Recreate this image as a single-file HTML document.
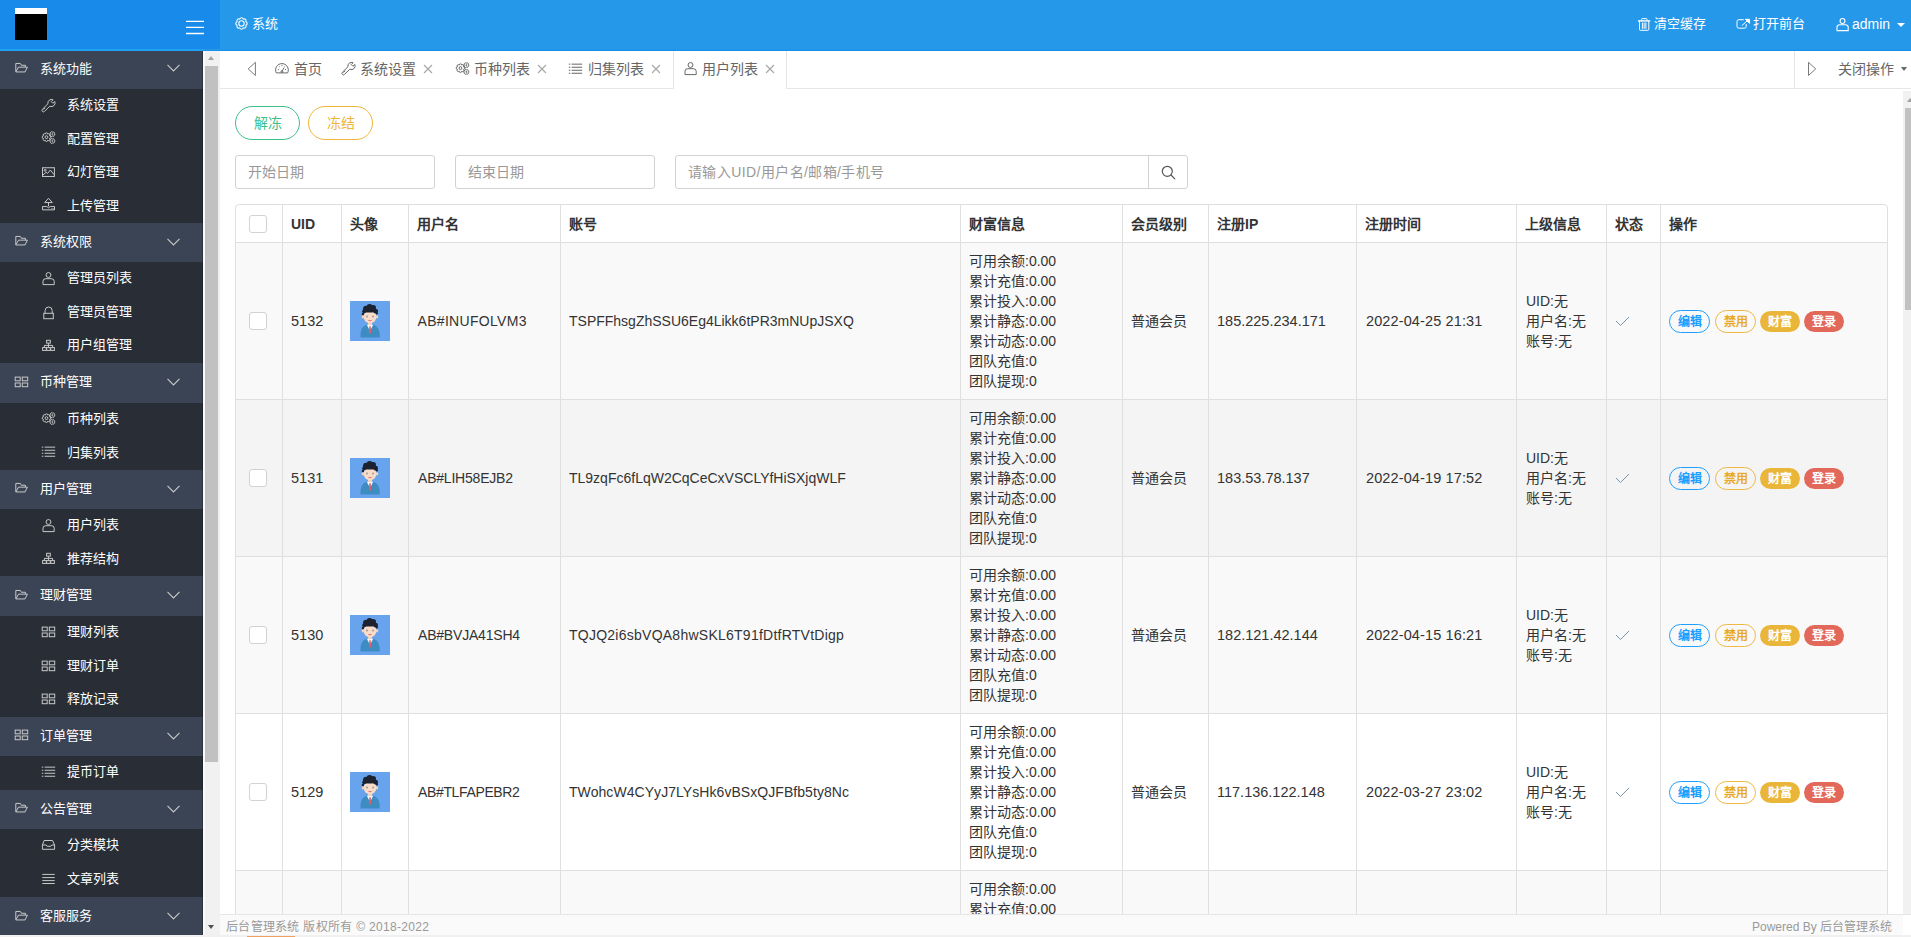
<!DOCTYPE html><html lang="zh-CN"><head><meta charset="utf-8"><title>后台管理系统</title><style>
html,body{margin:0;padding:0;width:1911px;height:937px;overflow:hidden;background:#fff;font-family:"Liberation Sans", sans-serif;}
div,span{box-sizing:border-box;}
</style></head><body>
<div style="position:absolute;left:0px;top:0px;width:1911px;height:51px;background:#2598ea;"></div>
<div style="position:absolute;left:0px;top:0px;width:220px;height:49px;background:#188bea;"></div>
<div style="position:absolute;left:220px;top:49px;width:1691px;height:1px;background:#2295ea;"></div>
<div style="position:absolute;left:203px;top:50px;width:1708px;height:1px;background:#1a8fe8;"></div>
<div style="position:absolute;left:0px;top:49px;width:203px;height:2px;background:#22a0f3;"></div>
<div style="position:absolute;left:15px;top:8px;width:32px;height:32px;background:#000;"></div>
<div style="position:absolute;left:15px;top:8px;width:32px;height:6px;background:#fff;"></div>
<svg style="position:absolute;left:186px;top:18px" width="18" height="18" viewBox="0 0 18 18" stroke="#fff" stroke-width="1.3"><path d="M0 3.4h18M0 9.3h18M0 15.5h18"/></svg>
<svg style="position:absolute;left:234px;top:15.5px" width="15" height="15" viewBox="0 0 14 14" fill="none" stroke="#fff" stroke-width="1.0" stroke-linecap="round" stroke-linejoin="round"><circle cx="7" cy="7" r="2.5"/><path d="M11.07 5.32A1.75 1.75 0 0 1 11.07 8.68A1.75 1.75 0 0 1 8.68 11.07A1.75 1.75 0 0 1 5.32 11.07A1.75 1.75 0 0 1 2.93 8.68A1.75 1.75 0 0 1 2.93 5.32A1.75 1.75 0 0 1 5.32 2.93A1.75 1.75 0 0 1 8.68 2.93A1.75 1.75 0 0 1 11.07 5.32z"/></svg>
<div style="position:absolute;left:252px;top:14.0px;line-height:20px;font-size:13px;color:#fff;font-weight:normal;white-space:nowrap;">系统</div>
<svg style="position:absolute;left:1634px;top:15px;color:#fff" width="18.0" height="18.0" viewBox="0 0 18 18" fill="none" stroke="#fff" stroke-width="1.0" stroke-linecap="butt" stroke-linejoin="miter"><path d="M3.9 5.9H16.2" stroke-width="1.4"/><path d="M7.6 5.6V4.3Q7.6 3.6 8.3 3.6H12.3Q13 3.6 13 4.3V5.6"/><path d="M5.5 6V14.4Q5.5 15.3 6.4 15.3H13.9Q14.8 15.3 14.8 14.4V6"/><path d="M8.4 7.6V13.8M10.15 7.6V13.8M11.9 7.6V13.8"/></svg>
<div style="position:absolute;left:1654px;top:14.0px;line-height:20px;font-size:13px;color:#fff;font-weight:normal;white-space:nowrap;">清空缓存</div>
<svg style="position:absolute;left:1734px;top:15px;color:#fff" width="18.0" height="18.0" viewBox="0 0 18 18" fill="none" stroke="#fff" stroke-width="1.0" stroke-linecap="butt" stroke-linejoin="miter"><path d="M9.8 4.7H4.8Q3 4.7 3 6.5V11.4Q3 13.2 4.8 13.2H10.4Q12.2 13.2 12.2 11.4V9"/><path d="M7.8 10.6L13.8 5.4"/><path d="M11.3 4.3H15.6V8.4Z" fill="currentColor"/></svg>
<div style="position:absolute;left:1753px;top:14.0px;line-height:20px;font-size:13px;color:#fff;font-weight:normal;white-space:nowrap;">打开前台</div>
<svg style="position:absolute;left:1834px;top:16px;color:#fff" width="18.0" height="18.0" viewBox="0 0 18 18" fill="none" stroke="#fff" stroke-width="1.1" stroke-linecap="butt" stroke-linejoin="miter"><circle cx="8.5" cy="5" r="2.45"/><path d="M3 14.6V11.2Q3 8.7 5.8 8.7H11.2Q14.2 8.7 14.2 11.2V14.6Z"/></svg>
<div style="position:absolute;left:1852px;top:14.0px;line-height:20px;font-size:14px;color:#fff;font-weight:normal;white-space:nowrap;">admin</div>
<div style="position:absolute;left:1897px;top:23px;width:0;height:0;border-left:4px solid transparent;border-right:4px solid transparent;border-top:4px solid #fff;"></div>
<div style="position:absolute;left:0px;top:51px;width:203px;height:886px;background:#282d36;"></div>
<div style="position:absolute;left:0;top:51px;width:203px;height:886px;overflow:hidden;">
<div style="position:absolute;left:0;top:-51px;width:203px;height:1000px;">
<div style="position:absolute;left:0px;top:49.5px;width:203px;height:39.5px;background:#3a4454;"></div><svg style="position:absolute;left:13px;top:60px;color:#c8c8c8" width="18.0" height="18.0" viewBox="0 0 18 18" fill="none" stroke="#c8c8c8" stroke-width="1.0" stroke-linecap="butt" stroke-linejoin="miter"><path d="M2.8 11.95V3.45H7.3L8.3 5.25H12.4V7.15"/><path d="M5.5 7.15H14.4L12 11.95H2.8"/><path d="M5.5 7.15L3 11.6"/></svg><div style="position:absolute;left:40px;top:58.55px;line-height:20px;font-size:13px;color:#fff;font-weight:normal;white-space:nowrap;">系统功能</div><svg style="position:absolute;left:167px;top:64.25px" width="13" height="8" viewBox="0 0 13 8" fill="none" stroke="#c8c8c8" stroke-width="1.1"><path d="M0.5 0.8L6.5 7L12.5 0.8"/></svg><svg style="position:absolute;left:40px;top:97px;color:#c8c8c8" width="18.0" height="18.0" viewBox="0 0 18 18" fill="none" stroke="#c8c8c8" stroke-width="1.0" stroke-linecap="butt" stroke-linejoin="miter"><path d="M7.97 6.71L2.34 12.34A1.5 1.5 0 0 0 4.46 14.46L9.77 9.15A3.6 3.6 0 0 0 14.75 4.45L12.92 6.28L11.22 4.59L13.06 2.75A3.6 3.6 0 0 0 7.97 6.71Z"/><path d="M3.3 12.6L5.2 10.7"/></svg><div style="position:absolute;left:67px;top:95.05px;line-height:20px;font-size:13px;color:#fff;font-weight:normal;white-space:nowrap;">系统设置</div><svg style="position:absolute;left:40px;top:130px;color:#c8c8c8" width="18.0" height="18.0" viewBox="0 0 18 18" fill="none" stroke="#c8c8c8" stroke-width="1.0" stroke-linecap="butt" stroke-linejoin="miter"><path d="M9.55 5.89A1.0 1.0 0 0 1 9.55 8.41A1.0 1.0 0 0 1 7.76 10.20A1.0 1.0 0 0 1 5.24 10.20A1.0 1.0 0 0 1 3.45 8.41A1.0 1.0 0 0 1 3.45 5.89A1.0 1.0 0 0 1 5.24 4.10A1.0 1.0 0 0 1 7.76 4.10A1.0 1.0 0 0 1 9.55 5.89z"/><circle cx="6.5" cy="7.15" r="1.4"/><path d="M13.95 3.20A0.75 0.75 0 0 1 13.95 5.10A0.75 0.75 0 0 1 12.30 6.05A0.75 0.75 0 0 1 10.65 5.10A0.75 0.75 0 0 1 10.65 3.20A0.75 0.75 0 0 1 12.30 2.25A0.75 0.75 0 0 1 13.95 3.20z"/><path d="M13.95 10.00A0.75 0.75 0 0 1 13.95 11.90A0.75 0.75 0 0 1 12.30 12.85A0.75 0.75 0 0 1 10.65 11.90A0.75 0.75 0 0 1 10.65 10.00A0.75 0.75 0 0 1 12.30 9.05A0.75 0.75 0 0 1 13.95 10.00z"/><circle cx="12.3" cy="4.15" r="0.5"/><circle cx="12.3" cy="10.95" r="0.5"/></svg><div style="position:absolute;left:67px;top:128.55px;line-height:20px;font-size:13px;color:#fff;font-weight:normal;white-space:nowrap;">配置管理</div><svg style="position:absolute;left:40px;top:164px;color:#c8c8c8" width="18.0" height="18.0" viewBox="0 0 18 18" fill="none" stroke="#c8c8c8" stroke-width="1.0" stroke-linecap="butt" stroke-linejoin="miter"><rect x="2.5" y="3.75" width="11.9" height="8.7"/><circle cx="5.2" cy="6.3" r="1"/><path d="M3 10.9L6.2 8.3L7.6 9.4L10.3 6L14 10.6"/></svg><div style="position:absolute;left:67px;top:162.05px;line-height:20px;font-size:13px;color:#fff;font-weight:normal;white-space:nowrap;">幻灯管理</div><svg style="position:absolute;left:40px;top:197px;color:#c8c8c8" width="18.0" height="18.0" viewBox="0 0 18 18" fill="none" stroke="#c8c8c8" stroke-width="1.0" stroke-linecap="butt" stroke-linejoin="miter"><path d="M8.5 1.25L12.3 5.55H4.7Z"/><path d="M8.5 5.55V9.3"/><path d="M2.5 9.55H6.8L8.5 10.8L10.2 9.55H14.5V12.85H2.5Z"/><path d="M11.8 11.2V11.9M13.2 11.2V11.9"/></svg><div style="position:absolute;left:67px;top:195.55px;line-height:20px;font-size:13px;color:#fff;font-weight:normal;white-space:nowrap;">上传管理</div><div style="position:absolute;left:0px;top:223px;width:203px;height:39px;background:#3a4454;"></div><svg style="position:absolute;left:13px;top:233px;color:#c8c8c8" width="18.0" height="18.0" viewBox="0 0 18 18" fill="none" stroke="#c8c8c8" stroke-width="1.0" stroke-linecap="butt" stroke-linejoin="miter"><path d="M2.8 11.95V3.45H7.3L8.3 5.25H12.4V7.15"/><path d="M5.5 7.15H14.4L12 11.95H2.8"/><path d="M5.5 7.15L3 11.6"/></svg><div style="position:absolute;left:40px;top:231.8px;line-height:20px;font-size:13px;color:#fff;font-weight:normal;white-space:nowrap;">系统权限</div><svg style="position:absolute;left:167px;top:237.5px" width="13" height="8" viewBox="0 0 13 8" fill="none" stroke="#c8c8c8" stroke-width="1.1"><path d="M0.5 0.8L6.5 7L12.5 0.8"/></svg><svg style="position:absolute;left:40px;top:270px;color:#c8c8c8" width="18.0" height="18.0" viewBox="0 0 18 18" fill="none" stroke="#c8c8c8" stroke-width="1.0" stroke-linecap="butt" stroke-linejoin="miter"><circle cx="8.5" cy="5" r="2.45"/><path d="M3 14.6V11.2Q3 8.7 5.8 8.7H11.2Q14.2 8.7 14.2 11.2V14.6Z"/></svg><div style="position:absolute;left:67px;top:268.1333333333333px;line-height:20px;font-size:13px;color:#fff;font-weight:normal;white-space:nowrap;">管理员列表</div><svg style="position:absolute;left:40px;top:304px;color:#c8c8c8" width="18.0" height="18.0" viewBox="0 0 18 18" fill="none" stroke="#c8c8c8" stroke-width="1.0" stroke-linecap="butt" stroke-linejoin="miter"><path d="M5.1 9.3V6.55A3.55 3.55 0 0 1 12.2 6.55V9.3"/><rect x="3.8" y="9.3" width="9.5" height="5.4"/></svg><div style="position:absolute;left:67px;top:301.8px;line-height:20px;font-size:13px;color:#fff;font-weight:normal;white-space:nowrap;">管理员管理</div><svg style="position:absolute;left:40px;top:337px;color:#c8c8c8" width="18.0" height="18.0" viewBox="0 0 18 18" fill="none" stroke="#c8c8c8" stroke-width="1.0" stroke-linecap="butt" stroke-linejoin="miter"><rect x="6.6" y="3.3" width="3.7" height="2.8"/><path d="M8.45 6.1V8.4M4.4 10.6V8.4H12.6V10.6M8.45 8.4V10.6"/><rect x="2.6" y="10.6" width="3.7" height="2.8"/><rect x="6.6" y="10.6" width="3.7" height="2.8"/><rect x="10.7" y="10.6" width="3.7" height="2.8"/></svg><div style="position:absolute;left:67px;top:335.46666666666664px;line-height:20px;font-size:13px;color:#fff;font-weight:normal;white-space:nowrap;">用户组管理</div><div style="position:absolute;left:0px;top:363px;width:203px;height:40px;background:#3a4454;"></div><svg style="position:absolute;left:13px;top:374px;color:#c8c8c8" width="18.0" height="18.0" viewBox="0 0 18 18" fill="none" stroke="#c8c8c8" stroke-width="1.0" stroke-linecap="butt" stroke-linejoin="miter"><rect x="2.2" y="3.1" width="5.0" height="3.7"/><rect x="9.3" y="3.1" width="5.4" height="3.7"/><rect x="2.2" y="9" width="5.0" height="3.7"/><rect x="9.3" y="9" width="5.4" height="3.7"/></svg><div style="position:absolute;left:40px;top:372.3px;line-height:20px;font-size:13px;color:#fff;font-weight:normal;white-space:nowrap;">币种管理</div><svg style="position:absolute;left:167px;top:378.0px" width="13" height="8" viewBox="0 0 13 8" fill="none" stroke="#c8c8c8" stroke-width="1.1"><path d="M0.5 0.8L6.5 7L12.5 0.8"/></svg><svg style="position:absolute;left:40px;top:411px;color:#c8c8c8" width="18.0" height="18.0" viewBox="0 0 18 18" fill="none" stroke="#c8c8c8" stroke-width="1.0" stroke-linecap="butt" stroke-linejoin="miter"><path d="M9.55 5.89A1.0 1.0 0 0 1 9.55 8.41A1.0 1.0 0 0 1 7.76 10.20A1.0 1.0 0 0 1 5.24 10.20A1.0 1.0 0 0 1 3.45 8.41A1.0 1.0 0 0 1 3.45 5.89A1.0 1.0 0 0 1 5.24 4.10A1.0 1.0 0 0 1 7.76 4.10A1.0 1.0 0 0 1 9.55 5.89z"/><circle cx="6.5" cy="7.15" r="1.4"/><path d="M13.95 3.20A0.75 0.75 0 0 1 13.95 5.10A0.75 0.75 0 0 1 12.30 6.05A0.75 0.75 0 0 1 10.65 5.10A0.75 0.75 0 0 1 10.65 3.20A0.75 0.75 0 0 1 12.30 2.25A0.75 0.75 0 0 1 13.95 3.20z"/><path d="M13.95 10.00A0.75 0.75 0 0 1 13.95 11.90A0.75 0.75 0 0 1 12.30 12.85A0.75 0.75 0 0 1 10.65 11.90A0.75 0.75 0 0 1 10.65 10.00A0.75 0.75 0 0 1 12.30 9.05A0.75 0.75 0 0 1 13.95 10.00z"/><circle cx="12.3" cy="4.15" r="0.5"/><circle cx="12.3" cy="10.95" r="0.5"/></svg><div style="position:absolute;left:67px;top:409.05px;line-height:20px;font-size:13px;color:#fff;font-weight:normal;white-space:nowrap;">币种列表</div><svg style="position:absolute;left:40px;top:444px;color:#c8c8c8" width="18.0" height="18.0" viewBox="0 0 18 18" fill="none" stroke="#c8c8c8" stroke-width="1.0" stroke-linecap="butt" stroke-linejoin="miter"><path d="M1.8 3.15H3.3M1.8 6.25H3.3M1.8 9.25H3.3M1.8 12.25H3.3M4.6 3.15H15.2M4.6 6.25H15.2M4.6 9.25H15.2M4.6 12.25H15.2"/></svg><div style="position:absolute;left:67px;top:442.55px;line-height:20px;font-size:13px;color:#fff;font-weight:normal;white-space:nowrap;">归集列表</div><div style="position:absolute;left:0px;top:470px;width:203px;height:39px;background:#3a4454;"></div><svg style="position:absolute;left:13px;top:480px;color:#c8c8c8" width="18.0" height="18.0" viewBox="0 0 18 18" fill="none" stroke="#c8c8c8" stroke-width="1.0" stroke-linecap="butt" stroke-linejoin="miter"><path d="M2.8 11.95V3.45H7.3L8.3 5.25H12.4V7.15"/><path d="M5.5 7.15H14.4L12 11.95H2.8"/><path d="M5.5 7.15L3 11.6"/></svg><div style="position:absolute;left:40px;top:478.8px;line-height:20px;font-size:13px;color:#fff;font-weight:normal;white-space:nowrap;">用户管理</div><svg style="position:absolute;left:167px;top:484.5px" width="13" height="8" viewBox="0 0 13 8" fill="none" stroke="#c8c8c8" stroke-width="1.1"><path d="M0.5 0.8L6.5 7L12.5 0.8"/></svg><svg style="position:absolute;left:40px;top:517px;color:#c8c8c8" width="18.0" height="18.0" viewBox="0 0 18 18" fill="none" stroke="#c8c8c8" stroke-width="1.0" stroke-linecap="butt" stroke-linejoin="miter"><circle cx="8.5" cy="5" r="2.45"/><path d="M3 14.6V11.2Q3 8.7 5.8 8.7H11.2Q14.2 8.7 14.2 11.2V14.6Z"/></svg><div style="position:absolute;left:67px;top:515.05px;line-height:20px;font-size:13px;color:#fff;font-weight:normal;white-space:nowrap;">用户列表</div><svg style="position:absolute;left:40px;top:550px;color:#c8c8c8" width="18.0" height="18.0" viewBox="0 0 18 18" fill="none" stroke="#c8c8c8" stroke-width="1.0" stroke-linecap="butt" stroke-linejoin="miter"><rect x="6.6" y="3.3" width="3.7" height="2.8"/><path d="M8.45 6.1V8.4M4.4 10.6V8.4H12.6V10.6M8.45 8.4V10.6"/><rect x="2.6" y="10.6" width="3.7" height="2.8"/><rect x="6.6" y="10.6" width="3.7" height="2.8"/><rect x="10.7" y="10.6" width="3.7" height="2.8"/></svg><div style="position:absolute;left:67px;top:548.55px;line-height:20px;font-size:13px;color:#fff;font-weight:normal;white-space:nowrap;">推荐结构</div><div style="position:absolute;left:0px;top:576px;width:203px;height:40px;background:#3a4454;"></div><svg style="position:absolute;left:13px;top:587px;color:#c8c8c8" width="18.0" height="18.0" viewBox="0 0 18 18" fill="none" stroke="#c8c8c8" stroke-width="1.0" stroke-linecap="butt" stroke-linejoin="miter"><path d="M2.8 11.95V3.45H7.3L8.3 5.25H12.4V7.15"/><path d="M5.5 7.15H14.4L12 11.95H2.8"/><path d="M5.5 7.15L3 11.6"/></svg><div style="position:absolute;left:40px;top:585.3px;line-height:20px;font-size:13px;color:#fff;font-weight:normal;white-space:nowrap;">理财管理</div><svg style="position:absolute;left:167px;top:591.0px" width="13" height="8" viewBox="0 0 13 8" fill="none" stroke="#c8c8c8" stroke-width="1.1"><path d="M0.5 0.8L6.5 7L12.5 0.8"/></svg><svg style="position:absolute;left:40px;top:624px;color:#c8c8c8" width="18.0" height="18.0" viewBox="0 0 18 18" fill="none" stroke="#c8c8c8" stroke-width="1.0" stroke-linecap="butt" stroke-linejoin="miter"><rect x="2.2" y="3.1" width="5.0" height="3.7"/><rect x="9.3" y="3.1" width="5.4" height="3.7"/><rect x="2.2" y="9" width="5.0" height="3.7"/><rect x="9.3" y="9" width="5.4" height="3.7"/></svg><div style="position:absolute;left:67px;top:622.1333333333333px;line-height:20px;font-size:13px;color:#fff;font-weight:normal;white-space:nowrap;">理财列表</div><svg style="position:absolute;left:40px;top:658px;color:#c8c8c8" width="18.0" height="18.0" viewBox="0 0 18 18" fill="none" stroke="#c8c8c8" stroke-width="1.0" stroke-linecap="butt" stroke-linejoin="miter"><rect x="2.2" y="3.1" width="5.0" height="3.7"/><rect x="9.3" y="3.1" width="5.4" height="3.7"/><rect x="2.2" y="9" width="5.0" height="3.7"/><rect x="9.3" y="9" width="5.4" height="3.7"/></svg><div style="position:absolute;left:67px;top:655.8px;line-height:20px;font-size:13px;color:#fff;font-weight:normal;white-space:nowrap;">理财订单</div><svg style="position:absolute;left:40px;top:691px;color:#c8c8c8" width="18.0" height="18.0" viewBox="0 0 18 18" fill="none" stroke="#c8c8c8" stroke-width="1.0" stroke-linecap="butt" stroke-linejoin="miter"><rect x="2.2" y="3.1" width="5.0" height="3.7"/><rect x="9.3" y="3.1" width="5.4" height="3.7"/><rect x="2.2" y="9" width="5.0" height="3.7"/><rect x="9.3" y="9" width="5.4" height="3.7"/></svg><div style="position:absolute;left:67px;top:689.4666666666667px;line-height:20px;font-size:13px;color:#fff;font-weight:normal;white-space:nowrap;">释放记录</div><div style="position:absolute;left:0px;top:717px;width:203px;height:39px;background:#3a4454;"></div><svg style="position:absolute;left:13px;top:727px;color:#c8c8c8" width="18.0" height="18.0" viewBox="0 0 18 18" fill="none" stroke="#c8c8c8" stroke-width="1.0" stroke-linecap="butt" stroke-linejoin="miter"><rect x="2.2" y="3.1" width="5.0" height="3.7"/><rect x="9.3" y="3.1" width="5.4" height="3.7"/><rect x="2.2" y="9" width="5.0" height="3.7"/><rect x="9.3" y="9" width="5.4" height="3.7"/></svg><div style="position:absolute;left:40px;top:725.8px;line-height:20px;font-size:13px;color:#fff;font-weight:normal;white-space:nowrap;">订单管理</div><svg style="position:absolute;left:167px;top:731.5px" width="13" height="8" viewBox="0 0 13 8" fill="none" stroke="#c8c8c8" stroke-width="1.1"><path d="M0.5 0.8L6.5 7L12.5 0.8"/></svg><svg style="position:absolute;left:40px;top:764px;color:#c8c8c8" width="18.0" height="18.0" viewBox="0 0 18 18" fill="none" stroke="#c8c8c8" stroke-width="1.0" stroke-linecap="butt" stroke-linejoin="miter"><path d="M1.8 3.15H3.3M1.8 6.25H3.3M1.8 9.25H3.3M1.8 12.25H3.3M4.6 3.15H15.2M4.6 6.25H15.2M4.6 9.25H15.2M4.6 12.25H15.2"/></svg><div style="position:absolute;left:67px;top:762.3px;line-height:20px;font-size:13px;color:#fff;font-weight:normal;white-space:nowrap;">提币订单</div><div style="position:absolute;left:0px;top:790px;width:203px;height:39px;background:#3a4454;"></div><svg style="position:absolute;left:13px;top:800px;color:#c8c8c8" width="18.0" height="18.0" viewBox="0 0 18 18" fill="none" stroke="#c8c8c8" stroke-width="1.0" stroke-linecap="butt" stroke-linejoin="miter"><path d="M2.8 11.95V3.45H7.3L8.3 5.25H12.4V7.15"/><path d="M5.5 7.15H14.4L12 11.95H2.8"/><path d="M5.5 7.15L3 11.6"/></svg><div style="position:absolute;left:40px;top:798.8px;line-height:20px;font-size:13px;color:#fff;font-weight:normal;white-space:nowrap;">公告管理</div><svg style="position:absolute;left:167px;top:804.5px" width="13" height="8" viewBox="0 0 13 8" fill="none" stroke="#c8c8c8" stroke-width="1.1"><path d="M0.5 0.8L6.5 7L12.5 0.8"/></svg><svg style="position:absolute;left:40px;top:837px;color:#c8c8c8" width="18.0" height="18.0" viewBox="0 0 18 18" fill="none" stroke="#c8c8c8" stroke-width="1.0" stroke-linecap="butt" stroke-linejoin="miter"><path d="M2.4 8L4.1 3.5H12.5L14.6 8V12.3H2.4Z"/><path d="M2.4 8H6.3L7.2 9.3H10.8L11.7 8H14.6"/></svg><div style="position:absolute;left:67px;top:835.3px;line-height:20px;font-size:13px;color:#fff;font-weight:normal;white-space:nowrap;">分类模块</div><svg style="position:absolute;left:40px;top:871px;color:#c8c8c8" width="18.0" height="18.0" viewBox="0 0 18 18" fill="none" stroke="#c8c8c8" stroke-width="1.0" stroke-linecap="butt" stroke-linejoin="miter"><path d="M2.3 3.4H14.7M2.3 6.6H14.7M2.3 9.6H14.7M2.3 12.5H14.7"/></svg><div style="position:absolute;left:67px;top:869.3px;line-height:20px;font-size:13px;color:#fff;font-weight:normal;white-space:nowrap;">文章列表</div><div style="position:absolute;left:0px;top:897px;width:203px;height:40px;background:#3a4454;"></div><svg style="position:absolute;left:13px;top:908px;color:#c8c8c8" width="18.0" height="18.0" viewBox="0 0 18 18" fill="none" stroke="#c8c8c8" stroke-width="1.0" stroke-linecap="butt" stroke-linejoin="miter"><path d="M2.8 11.95V3.45H7.3L8.3 5.25H12.4V7.15"/><path d="M5.5 7.15H14.4L12 11.95H2.8"/><path d="M5.5 7.15L3 11.6"/></svg><div style="position:absolute;left:40px;top:906.3px;line-height:20px;font-size:13px;color:#fff;font-weight:normal;white-space:nowrap;">客服服务</div><svg style="position:absolute;left:167px;top:912.0px" width="13" height="8" viewBox="0 0 13 8" fill="none" stroke="#c8c8c8" stroke-width="1.1"><path d="M0.5 0.8L6.5 7L12.5 0.8"/></svg>
</div></div>
<div style="position:absolute;left:202px;top:51px;width:1px;height:884px;background:rgba(0,0,0,0.22);"></div>
<div style="position:absolute;left:203px;top:51px;width:17px;height:886px;background:#f1f1f1;"></div>
<div style="position:absolute;left:203px;top:51px;width:2px;height:886px;background:#fafafa;"></div>
<div style="position:absolute;left:208px;top:56px;width:0;height:0;border-left:3.5px solid transparent;border-right:3.5px solid transparent;border-bottom:4px solid #a3a3a3;"></div>
<div style="position:absolute;left:205px;top:66px;width:13px;height:696px;background:#c1c1c1;"></div>
<div style="position:absolute;left:208px;top:925px;width:0;height:0;border-left:3.5px solid transparent;border-right:3.5px solid transparent;border-top:4px solid #505050;"></div>
<div style="position:absolute;left:0px;top:935px;width:1911px;height:2px;background:#f0f0f0;"></div>
<div style="position:absolute;left:247px;top:936px;width:48px;height:1px;background:#f0a060;"></div>
<div style="position:absolute;left:220px;top:51px;width:1691px;height:38px;background:#fff;"></div>
<div style="position:absolute;left:220px;top:88px;width:1691px;height:1px;background:#e6e6e6;"></div>
<svg style="position:absolute;left:247px;top:61px" width="10" height="16" viewBox="0 0 10 16" fill="none" stroke="#7a7a7a" stroke-width="1"><path d="M8.4 1.3L1.2 7.9L8.4 14.5Z"/></svg>
<svg style="position:absolute;left:273px;top:60px;color:#666" width="18.0" height="18.0" viewBox="0 0 18 18" fill="none" stroke="#666" stroke-width="1.0" stroke-linecap="butt" stroke-linejoin="miter"><path d="M3.33 12.9A6.35 6.35 0 1 1 14.57 12.9Z"/><path d="M8.95 11.3L11.2 7.6M4.9 9.6H5.9M6.2 6.5L6.8 7.1M8.95 5.1V6.1M11.7 6.5L11.1 7.1M12 9.6H13"/><circle cx="8.95" cy="11.6" r="0.9"/></svg>
<div style="position:absolute;left:294px;top:59.0px;line-height:20px;font-size:14px;color:#666;font-weight:normal;white-space:nowrap;">首页</div>
<svg style="position:absolute;left:340px;top:60px;color:#666" width="18.0" height="18.0" viewBox="0 0 18 18" fill="none" stroke="#666" stroke-width="1.0" stroke-linecap="butt" stroke-linejoin="miter"><path d="M7.97 6.71L2.34 12.34A1.5 1.5 0 0 0 4.46 14.46L9.77 9.15A3.6 3.6 0 0 0 14.75 4.45L12.92 6.28L11.22 4.59L13.06 2.75A3.6 3.6 0 0 0 7.97 6.71Z"/><path d="M3.3 12.6L5.2 10.7"/></svg>
<div style="position:absolute;left:360px;top:59.0px;line-height:20px;font-size:14px;color:#666;font-weight:normal;white-space:nowrap;">系统设置</div>
<svg style="position:absolute;left:423.4px;top:63.6px" width="10" height="10" viewBox="0 0 10 10" fill="none" stroke="#a8a8a8" stroke-width="1.15"><path d="M1 1L9 9M9 1L1 9"/></svg>
<svg style="position:absolute;left:454px;top:61px;color:#666" width="18.0" height="18.0" viewBox="0 0 18 18" fill="none" stroke="#666" stroke-width="1.0" stroke-linecap="butt" stroke-linejoin="miter"><path d="M9.55 5.89A1.0 1.0 0 0 1 9.55 8.41A1.0 1.0 0 0 1 7.76 10.20A1.0 1.0 0 0 1 5.24 10.20A1.0 1.0 0 0 1 3.45 8.41A1.0 1.0 0 0 1 3.45 5.89A1.0 1.0 0 0 1 5.24 4.10A1.0 1.0 0 0 1 7.76 4.10A1.0 1.0 0 0 1 9.55 5.89z"/><circle cx="6.5" cy="7.15" r="1.4"/><path d="M13.95 3.20A0.75 0.75 0 0 1 13.95 5.10A0.75 0.75 0 0 1 12.30 6.05A0.75 0.75 0 0 1 10.65 5.10A0.75 0.75 0 0 1 10.65 3.20A0.75 0.75 0 0 1 12.30 2.25A0.75 0.75 0 0 1 13.95 3.20z"/><path d="M13.95 10.00A0.75 0.75 0 0 1 13.95 11.90A0.75 0.75 0 0 1 12.30 12.85A0.75 0.75 0 0 1 10.65 11.90A0.75 0.75 0 0 1 10.65 10.00A0.75 0.75 0 0 1 12.30 9.05A0.75 0.75 0 0 1 13.95 10.00z"/><circle cx="12.3" cy="4.15" r="0.5"/><circle cx="12.3" cy="10.95" r="0.5"/></svg>
<div style="position:absolute;left:474px;top:59.0px;line-height:20px;font-size:14px;color:#666;font-weight:normal;white-space:nowrap;">币种列表</div>
<svg style="position:absolute;left:537.4px;top:63.6px" width="10" height="10" viewBox="0 0 10 10" fill="none" stroke="#a8a8a8" stroke-width="1.15"><path d="M1 1L9 9M9 1L1 9"/></svg>
<svg style="position:absolute;left:567px;top:61px;color:#666" width="18.0" height="18.0" viewBox="0 0 18 18" fill="none" stroke="#666" stroke-width="1.0" stroke-linecap="butt" stroke-linejoin="miter"><path d="M1.8 3.15H3.3M1.8 6.25H3.3M1.8 9.25H3.3M1.8 12.25H3.3M4.6 3.15H15.2M4.6 6.25H15.2M4.6 9.25H15.2M4.6 12.25H15.2"/></svg>
<div style="position:absolute;left:588px;top:59.0px;line-height:20px;font-size:14px;color:#666;font-weight:normal;white-space:nowrap;">归集列表</div>
<svg style="position:absolute;left:651.4px;top:63.6px" width="10" height="10" viewBox="0 0 10 10" fill="none" stroke="#a8a8a8" stroke-width="1.15"><path d="M1 1L9 9M9 1L1 9"/></svg>
<svg style="position:absolute;left:682px;top:60px;color:#666" width="18.0" height="18.0" viewBox="0 0 18 18" fill="none" stroke="#666" stroke-width="1.0" stroke-linecap="butt" stroke-linejoin="miter"><circle cx="8.5" cy="5" r="2.45"/><path d="M3 14.6V11.2Q3 8.7 5.8 8.7H11.2Q14.2 8.7 14.2 11.2V14.6Z"/></svg>
<div style="position:absolute;left:702px;top:59.0px;line-height:20px;font-size:14px;color:#666;font-weight:normal;white-space:nowrap;">用户列表</div>
<svg style="position:absolute;left:765.4px;top:63.6px" width="10" height="10" viewBox="0 0 10 10" fill="none" stroke="#a8a8a8" stroke-width="1.15"><path d="M1 1L9 9M9 1L1 9"/></svg>
<div style="position:absolute;left:673px;top:51px;width:1px;height:38px;background:#e6e6e6;"></div>
<div style="position:absolute;left:786px;top:51px;width:1px;height:38px;background:#e6e6e6;"></div>
<div style="position:absolute;left:674px;top:88px;width:112px;height:1px;background:#fff;"></div>
<div style="position:absolute;left:1794px;top:51px;width:1px;height:38px;background:#e6e6e6;"></div>
<svg style="position:absolute;left:1807px;top:61px" width="10" height="16" viewBox="0 0 10 16" fill="none" stroke="#7a7a7a" stroke-width="1"><path d="M1.5 1.3L8.7 7.9L1.5 14.5Z"/></svg>
<div style="position:absolute;left:1838px;top:59.0px;line-height:20px;font-size:14px;color:#666;font-weight:normal;white-space:nowrap;">关闭操作</div>
<div style="position:absolute;left:1901px;top:67px;width:0;height:0;border-left:3.5px solid transparent;border-right:3.5px solid transparent;border-top:4px solid #666;"></div>
<div style="position:absolute;left:1903px;top:91px;width:8px;height:823px;background:#f1f1f1;"></div>
<div style="position:absolute;left:1905px;top:108px;width:6px;height:202px;background:#c1c1c1;"></div>
<div style="position:absolute;left:1907px;top:98px;width:0;height:0;border-left:3.5px solid transparent;border-right:3.5px solid transparent;border-bottom:4px solid #a3a3a3;"></div>
<div style="position:absolute;left:235px;top:106px;width:65px;height:34px;border:1px solid #3dbf8a;border-radius:17px;color:#3dbf8a;font-size:14px;line-height:32px;text-align:center;">解冻</div>
<div style="position:absolute;left:308px;top:106px;width:65px;height:34px;border:1px solid #efb63a;border-radius:17px;color:#efb63a;font-size:14px;line-height:32px;text-align:center;">冻结</div>
<div style="position:absolute;left:235px;top:155px;width:200px;height:34px;border:1px solid #d2d2d2;border-radius:3px;color:#999;font-size:14px;line-height:32px;padding-left:12px;">开始日期</div>
<div style="position:absolute;left:455px;top:155px;width:200px;height:34px;border:1px solid #d2d2d2;border-radius:3px;color:#999;font-size:14px;line-height:32px;padding-left:12px;">结束日期</div>
<div style="position:absolute;left:675px;top:155px;width:513px;height:34px;border:1px solid #d2d2d2;border-radius:3px;color:#999;font-size:14px;line-height:32px;padding-left:12px;"><span style="letter-spacing:0.4px">请输入UID/用户名/邮箱/手机号</span></div>
<div style="position:absolute;left:1148px;top:156px;width:1px;height:32px;background:#d2d2d2;"></div>
<svg style="position:absolute;left:1161px;top:165px" width="15" height="15" viewBox="0 0 15 15" fill="none" stroke="#555" stroke-width="1.2" stroke-linecap="round"><circle cx="6.3" cy="6.3" r="5"/><path d="M10 10l3.8 3.8"/></svg>
<div style="position:absolute;left:0;top:0;width:1903px;height:914px;overflow:hidden;">
<div style="position:absolute;left:236px;top:243px;width:1651px;height:156px;background:#f9f9f9;"></div><div style="position:absolute;left:236px;top:400px;width:1651px;height:156px;background:#f4f4f4;"></div><div style="position:absolute;left:236px;top:557px;width:1651px;height:156px;background:#f9f9f9;"></div><div style="position:absolute;left:236px;top:714px;width:1651px;height:156px;background:#fff;"></div><div style="position:absolute;left:236px;top:871px;width:1651px;height:156px;background:#f9f9f9;"></div><div style="position:absolute;left:282px;top:204px;width:1px;height:820px;background:#dfdfdf;"></div><div style="position:absolute;left:341px;top:204px;width:1px;height:820px;background:#dfdfdf;"></div><div style="position:absolute;left:408px;top:204px;width:1px;height:820px;background:#dfdfdf;"></div><div style="position:absolute;left:560px;top:204px;width:1px;height:820px;background:#dfdfdf;"></div><div style="position:absolute;left:960px;top:204px;width:1px;height:820px;background:#dfdfdf;"></div><div style="position:absolute;left:1122px;top:204px;width:1px;height:820px;background:#dfdfdf;"></div><div style="position:absolute;left:1208px;top:204px;width:1px;height:820px;background:#dfdfdf;"></div><div style="position:absolute;left:1356px;top:204px;width:1px;height:820px;background:#dfdfdf;"></div><div style="position:absolute;left:1516px;top:204px;width:1px;height:820px;background:#dfdfdf;"></div><div style="position:absolute;left:1606px;top:204px;width:1px;height:820px;background:#dfdfdf;"></div><div style="position:absolute;left:1660px;top:204px;width:1px;height:820px;background:#dfdfdf;"></div><div style="position:absolute;left:235px;top:242px;width:1653px;height:1px;background:#dfdfdf;"></div><div style="position:absolute;left:235px;top:399px;width:1653px;height:1px;background:#dfdfdf;"></div><div style="position:absolute;left:235px;top:556px;width:1653px;height:1px;background:#dfdfdf;"></div><div style="position:absolute;left:235px;top:713px;width:1653px;height:1px;background:#dfdfdf;"></div><div style="position:absolute;left:235px;top:870px;width:1653px;height:1px;background:#dfdfdf;"></div><div style="position:absolute;left:235px;top:1027px;width:1653px;height:1px;background:#dfdfdf;"></div><div style="position:absolute;left:235px;top:204px;width:1653px;height:900px;border:1px solid #dfdfdf;border-radius:4px;"></div><div style="position:absolute;left:249px;top:215px;width:18px;height:18px;border:1px solid #d2d2d2;border-radius:3px;background:#fff;"></div><div style="position:absolute;left:291px;top:213.5px;line-height:20px;font-size:14px;color:#333;font-weight:bold;white-space:nowrap;">UID</div><div style="position:absolute;left:350px;top:213.5px;line-height:20px;font-size:14px;color:#333;font-weight:bold;white-space:nowrap;">头像</div><div style="position:absolute;left:417px;top:213.5px;line-height:20px;font-size:14px;color:#333;font-weight:bold;white-space:nowrap;">用户名</div><div style="position:absolute;left:569px;top:213.5px;line-height:20px;font-size:14px;color:#333;font-weight:bold;white-space:nowrap;">账号</div><div style="position:absolute;left:969px;top:213.5px;line-height:20px;font-size:14px;color:#333;font-weight:bold;white-space:nowrap;">财富信息</div><div style="position:absolute;left:1131px;top:213.5px;line-height:20px;font-size:14px;color:#333;font-weight:bold;white-space:nowrap;">会员级别</div><div style="position:absolute;left:1217px;top:213.5px;line-height:20px;font-size:14px;color:#333;font-weight:bold;white-space:nowrap;">注册IP</div><div style="position:absolute;left:1365px;top:213.5px;line-height:20px;font-size:14px;color:#333;font-weight:bold;white-space:nowrap;">注册时间</div><div style="position:absolute;left:1525px;top:213.5px;line-height:20px;font-size:14px;color:#333;font-weight:bold;white-space:nowrap;">上级信息</div><div style="position:absolute;left:1615px;top:213.5px;line-height:20px;font-size:14px;color:#333;font-weight:bold;white-space:nowrap;">状态</div><div style="position:absolute;left:1669px;top:213.5px;line-height:20px;font-size:14px;color:#333;font-weight:bold;white-space:nowrap;">操作</div><div style="position:absolute;left:249px;top:312.0px;width:18px;height:18px;border:1px solid #d2d2d2;border-radius:3px;background:#fff;"></div><div style="position:absolute;left:291px;top:311.0px;line-height:20px;font-size:14.5px;color:#333;font-weight:normal;white-space:nowrap;">5132</div><svg style="position:absolute;left:350px;top:301px" width="40" height="40" viewBox="0 0 40 40"><rect width="40" height="40" fill="#68a4ee"/><path d="M10.5 36.5 Q10 25.5 16.5 23.8 L23.5 23.8 Q30 25.5 29.8 36.5 Z" fill="#3d8cc2"/><path d="M16.8 23.8 L20 30 L23.2 23.8 Z" fill="#f2f6f8"/><path d="M19.3 25.2 L20.7 25.2 L21.1 31.5 L20 33 L18.9 31.5 Z" fill="#d9606a"/><rect x="18" y="20.5" width="4" height="3.5" fill="#f3d2bd"/><ellipse cx="12.9" cy="15.8" rx="1.2" ry="1.6" fill="#f3d2bd"/><ellipse cx="27.1" cy="15.8" rx="1.2" ry="1.6" fill="#f3d2bd"/><ellipse cx="20" cy="16" rx="6.4" ry="6.2" fill="#f8dcc8"/><g fill="#1d2230"><circle cx="16" cy="7.6" r="2.9"/><circle cx="19.6" cy="5.9" r="3"/><circle cx="23.2" cy="6.8" r="2.8"/><circle cx="25.6" cy="10.2" r="2.4"/><circle cx="14.2" cy="10.3" r="2"/><circle cx="12.9" cy="13" r="1.2"/><circle cx="26.9" cy="12.4" r="1.1"/><path d="M13.5 11.4 Q19 11.9 26.5 10.9 L26 8 L14 8 Z"/></g><ellipse cx="17" cy="15.6" rx="0.8" ry="1" fill="#8a8f98"/><ellipse cx="23" cy="15.6" rx="0.8" ry="1" fill="#8a8f98"/><path d="M17.9 19.1 Q20 21.6 22.1 19.1 Z" fill="#e4787a"/></svg><div style="position:absolute;left:417.5px;top:311.0px;line-height:20px;font-size:14px;color:#333;font-weight:normal;white-space:nowrap;letter-spacing:0.31px">AB#INUFOLVM3</div><div style="position:absolute;left:569px;top:311.0px;line-height:20px;font-size:14px;color:#333;font-weight:normal;white-space:nowrap;letter-spacing:0px">TSPFFhsgZhSSU6Eg4Likk6tPR3mNUpJSXQ</div><div style="position:absolute;left:969px;top:251.0px;line-height:20px;font-size:14px;color:#333;font-weight:normal;white-space:nowrap;">可用余额:0.00</div><div style="position:absolute;left:969px;top:271.0px;line-height:20px;font-size:14px;color:#333;font-weight:normal;white-space:nowrap;">累计充值:0.00</div><div style="position:absolute;left:969px;top:291.0px;line-height:20px;font-size:14px;color:#333;font-weight:normal;white-space:nowrap;">累计投入:0.00</div><div style="position:absolute;left:969px;top:311.0px;line-height:20px;font-size:14px;color:#333;font-weight:normal;white-space:nowrap;">累计静态:0.00</div><div style="position:absolute;left:969px;top:331.0px;line-height:20px;font-size:14px;color:#333;font-weight:normal;white-space:nowrap;">累计动态:0.00</div><div style="position:absolute;left:969px;top:351.0px;line-height:20px;font-size:14px;color:#333;font-weight:normal;white-space:nowrap;">团队充值:0</div><div style="position:absolute;left:969px;top:371.0px;line-height:20px;font-size:14px;color:#333;font-weight:normal;white-space:nowrap;">团队提现:0</div><div style="position:absolute;left:1131px;top:311.0px;line-height:20px;font-size:14px;color:#333;font-weight:normal;white-space:nowrap;">普通会员</div><div style="position:absolute;left:1217px;top:311.0px;line-height:20px;font-size:14.5px;color:#333;font-weight:normal;white-space:nowrap;">185.225.234.171</div><div style="position:absolute;left:1366px;top:311.0px;line-height:20px;font-size:14.5px;color:#333;font-weight:normal;white-space:nowrap;letter-spacing:0.12px">2022-04-25 21:31</div><div style="position:absolute;left:1526px;top:291.0px;line-height:20px;font-size:14px;color:#333;font-weight:normal;white-space:nowrap;">UID:无</div><div style="position:absolute;left:1526px;top:311.0px;line-height:20px;font-size:14px;color:#333;font-weight:normal;white-space:nowrap;">用户名:无</div><div style="position:absolute;left:1526px;top:331.0px;line-height:20px;font-size:14px;color:#333;font-weight:normal;white-space:nowrap;">账号:无</div><svg style="position:absolute;left:1615px;top:316.0px" width="15" height="11" viewBox="0 0 15 11" fill="none" stroke="#7896ab" stroke-width="1"><path d="M1 5l4.5 4.5L14 1"/></svg><div style="position:absolute;left:1669px;top:310.0px;width:41px;height:23px;border:1px solid #1e9fff;border-radius:12px;color:#1e9fff;font-size:12px;font-weight:bold;line-height:23px;text-align:center;">编辑</div><div style="position:absolute;left:1715px;top:310.0px;width:41px;height:23px;border:1px solid #f0b840;border-radius:12px;color:#e8aa2a;font-size:12px;font-weight:bold;line-height:23px;text-align:center;">禁用</div><div style="position:absolute;left:1760px;top:311.0px;width:40px;height:21px;background:#e9b63a;border-radius:11px;color:#fff;font-size:12px;font-weight:bold;line-height:22px;text-align:center;">财富</div><div style="position:absolute;left:1804px;top:311.0px;width:40px;height:21px;background:#e2685a;border-radius:11px;color:#fff;font-size:12px;font-weight:bold;line-height:22px;text-align:center;">登录</div><div style="position:absolute;left:249px;top:469.0px;width:18px;height:18px;border:1px solid #d2d2d2;border-radius:3px;background:#fff;"></div><div style="position:absolute;left:291px;top:468.0px;line-height:20px;font-size:14.5px;color:#333;font-weight:normal;white-space:nowrap;">5131</div><svg style="position:absolute;left:350px;top:458px" width="40" height="40" viewBox="0 0 40 40"><rect width="40" height="40" fill="#68a4ee"/><path d="M10.5 36.5 Q10 25.5 16.5 23.8 L23.5 23.8 Q30 25.5 29.8 36.5 Z" fill="#3d8cc2"/><path d="M16.8 23.8 L20 30 L23.2 23.8 Z" fill="#f2f6f8"/><path d="M19.3 25.2 L20.7 25.2 L21.1 31.5 L20 33 L18.9 31.5 Z" fill="#d9606a"/><rect x="18" y="20.5" width="4" height="3.5" fill="#f3d2bd"/><ellipse cx="12.9" cy="15.8" rx="1.2" ry="1.6" fill="#f3d2bd"/><ellipse cx="27.1" cy="15.8" rx="1.2" ry="1.6" fill="#f3d2bd"/><ellipse cx="20" cy="16" rx="6.4" ry="6.2" fill="#f8dcc8"/><g fill="#1d2230"><circle cx="16" cy="7.6" r="2.9"/><circle cx="19.6" cy="5.9" r="3"/><circle cx="23.2" cy="6.8" r="2.8"/><circle cx="25.6" cy="10.2" r="2.4"/><circle cx="14.2" cy="10.3" r="2"/><circle cx="12.9" cy="13" r="1.2"/><circle cx="26.9" cy="12.4" r="1.1"/><path d="M13.5 11.4 Q19 11.9 26.5 10.9 L26 8 L14 8 Z"/></g><ellipse cx="17" cy="15.6" rx="0.8" ry="1" fill="#8a8f98"/><ellipse cx="23" cy="15.6" rx="0.8" ry="1" fill="#8a8f98"/><path d="M17.9 19.1 Q20 21.6 22.1 19.1 Z" fill="#e4787a"/></svg><div style="position:absolute;left:418px;top:468.0px;line-height:20px;font-size:14px;color:#333;font-weight:normal;white-space:nowrap;letter-spacing:-0.21px">AB#LIH58EJB2</div><div style="position:absolute;left:569px;top:468.0px;line-height:20px;font-size:14px;color:#333;font-weight:normal;white-space:nowrap;letter-spacing:0px">TL9zqFc6fLqW2CqCeCxVSCLYfHiSXjqWLF</div><div style="position:absolute;left:969px;top:408.0px;line-height:20px;font-size:14px;color:#333;font-weight:normal;white-space:nowrap;">可用余额:0.00</div><div style="position:absolute;left:969px;top:428.0px;line-height:20px;font-size:14px;color:#333;font-weight:normal;white-space:nowrap;">累计充值:0.00</div><div style="position:absolute;left:969px;top:448.0px;line-height:20px;font-size:14px;color:#333;font-weight:normal;white-space:nowrap;">累计投入:0.00</div><div style="position:absolute;left:969px;top:468.0px;line-height:20px;font-size:14px;color:#333;font-weight:normal;white-space:nowrap;">累计静态:0.00</div><div style="position:absolute;left:969px;top:488.0px;line-height:20px;font-size:14px;color:#333;font-weight:normal;white-space:nowrap;">累计动态:0.00</div><div style="position:absolute;left:969px;top:508.0px;line-height:20px;font-size:14px;color:#333;font-weight:normal;white-space:nowrap;">团队充值:0</div><div style="position:absolute;left:969px;top:528.0px;line-height:20px;font-size:14px;color:#333;font-weight:normal;white-space:nowrap;">团队提现:0</div><div style="position:absolute;left:1131px;top:468.0px;line-height:20px;font-size:14px;color:#333;font-weight:normal;white-space:nowrap;">普通会员</div><div style="position:absolute;left:1217px;top:468.0px;line-height:20px;font-size:14.5px;color:#333;font-weight:normal;white-space:nowrap;">183.53.78.137</div><div style="position:absolute;left:1366px;top:468.0px;line-height:20px;font-size:14.5px;color:#333;font-weight:normal;white-space:nowrap;letter-spacing:0.12px">2022-04-19 17:52</div><div style="position:absolute;left:1526px;top:448.0px;line-height:20px;font-size:14px;color:#333;font-weight:normal;white-space:nowrap;">UID:无</div><div style="position:absolute;left:1526px;top:468.0px;line-height:20px;font-size:14px;color:#333;font-weight:normal;white-space:nowrap;">用户名:无</div><div style="position:absolute;left:1526px;top:488.0px;line-height:20px;font-size:14px;color:#333;font-weight:normal;white-space:nowrap;">账号:无</div><svg style="position:absolute;left:1615px;top:473.0px" width="15" height="11" viewBox="0 0 15 11" fill="none" stroke="#7896ab" stroke-width="1"><path d="M1 5l4.5 4.5L14 1"/></svg><div style="position:absolute;left:1669px;top:467.0px;width:41px;height:23px;border:1px solid #1e9fff;border-radius:12px;color:#1e9fff;font-size:12px;font-weight:bold;line-height:23px;text-align:center;">编辑</div><div style="position:absolute;left:1715px;top:467.0px;width:41px;height:23px;border:1px solid #f0b840;border-radius:12px;color:#e8aa2a;font-size:12px;font-weight:bold;line-height:23px;text-align:center;">禁用</div><div style="position:absolute;left:1760px;top:468.0px;width:40px;height:21px;background:#e9b63a;border-radius:11px;color:#fff;font-size:12px;font-weight:bold;line-height:22px;text-align:center;">财富</div><div style="position:absolute;left:1804px;top:468.0px;width:40px;height:21px;background:#e2685a;border-radius:11px;color:#fff;font-size:12px;font-weight:bold;line-height:22px;text-align:center;">登录</div><div style="position:absolute;left:249px;top:626.0px;width:18px;height:18px;border:1px solid #d2d2d2;border-radius:3px;background:#fff;"></div><div style="position:absolute;left:291px;top:625.0px;line-height:20px;font-size:14.5px;color:#333;font-weight:normal;white-space:nowrap;">5130</div><svg style="position:absolute;left:350px;top:615px" width="40" height="40" viewBox="0 0 40 40"><rect width="40" height="40" fill="#68a4ee"/><path d="M10.5 36.5 Q10 25.5 16.5 23.8 L23.5 23.8 Q30 25.5 29.8 36.5 Z" fill="#3d8cc2"/><path d="M16.8 23.8 L20 30 L23.2 23.8 Z" fill="#f2f6f8"/><path d="M19.3 25.2 L20.7 25.2 L21.1 31.5 L20 33 L18.9 31.5 Z" fill="#d9606a"/><rect x="18" y="20.5" width="4" height="3.5" fill="#f3d2bd"/><ellipse cx="12.9" cy="15.8" rx="1.2" ry="1.6" fill="#f3d2bd"/><ellipse cx="27.1" cy="15.8" rx="1.2" ry="1.6" fill="#f3d2bd"/><ellipse cx="20" cy="16" rx="6.4" ry="6.2" fill="#f8dcc8"/><g fill="#1d2230"><circle cx="16" cy="7.6" r="2.9"/><circle cx="19.6" cy="5.9" r="3"/><circle cx="23.2" cy="6.8" r="2.8"/><circle cx="25.6" cy="10.2" r="2.4"/><circle cx="14.2" cy="10.3" r="2"/><circle cx="12.9" cy="13" r="1.2"/><circle cx="26.9" cy="12.4" r="1.1"/><path d="M13.5 11.4 Q19 11.9 26.5 10.9 L26 8 L14 8 Z"/></g><ellipse cx="17" cy="15.6" rx="0.8" ry="1" fill="#8a8f98"/><ellipse cx="23" cy="15.6" rx="0.8" ry="1" fill="#8a8f98"/><path d="M17.9 19.1 Q20 21.6 22.1 19.1 Z" fill="#e4787a"/></svg><div style="position:absolute;left:418px;top:625.0px;line-height:20px;font-size:14px;color:#333;font-weight:normal;white-space:nowrap;letter-spacing:-0.2px">AB#BVJA41SH4</div><div style="position:absolute;left:569px;top:625.0px;line-height:20px;font-size:14px;color:#333;font-weight:normal;white-space:nowrap;letter-spacing:0.25px">TQJQ2i6sbVQA8hwSKL6T91fDtfRTVtDigp</div><div style="position:absolute;left:969px;top:565.0px;line-height:20px;font-size:14px;color:#333;font-weight:normal;white-space:nowrap;">可用余额:0.00</div><div style="position:absolute;left:969px;top:585.0px;line-height:20px;font-size:14px;color:#333;font-weight:normal;white-space:nowrap;">累计充值:0.00</div><div style="position:absolute;left:969px;top:605.0px;line-height:20px;font-size:14px;color:#333;font-weight:normal;white-space:nowrap;">累计投入:0.00</div><div style="position:absolute;left:969px;top:625.0px;line-height:20px;font-size:14px;color:#333;font-weight:normal;white-space:nowrap;">累计静态:0.00</div><div style="position:absolute;left:969px;top:645.0px;line-height:20px;font-size:14px;color:#333;font-weight:normal;white-space:nowrap;">累计动态:0.00</div><div style="position:absolute;left:969px;top:665.0px;line-height:20px;font-size:14px;color:#333;font-weight:normal;white-space:nowrap;">团队充值:0</div><div style="position:absolute;left:969px;top:685.0px;line-height:20px;font-size:14px;color:#333;font-weight:normal;white-space:nowrap;">团队提现:0</div><div style="position:absolute;left:1131px;top:625.0px;line-height:20px;font-size:14px;color:#333;font-weight:normal;white-space:nowrap;">普通会员</div><div style="position:absolute;left:1217px;top:625.0px;line-height:20px;font-size:14.5px;color:#333;font-weight:normal;white-space:nowrap;">182.121.42.144</div><div style="position:absolute;left:1366px;top:625.0px;line-height:20px;font-size:14.5px;color:#333;font-weight:normal;white-space:nowrap;letter-spacing:0.12px">2022-04-15 16:21</div><div style="position:absolute;left:1526px;top:605.0px;line-height:20px;font-size:14px;color:#333;font-weight:normal;white-space:nowrap;">UID:无</div><div style="position:absolute;left:1526px;top:625.0px;line-height:20px;font-size:14px;color:#333;font-weight:normal;white-space:nowrap;">用户名:无</div><div style="position:absolute;left:1526px;top:645.0px;line-height:20px;font-size:14px;color:#333;font-weight:normal;white-space:nowrap;">账号:无</div><svg style="position:absolute;left:1615px;top:630.0px" width="15" height="11" viewBox="0 0 15 11" fill="none" stroke="#7896ab" stroke-width="1"><path d="M1 5l4.5 4.5L14 1"/></svg><div style="position:absolute;left:1669px;top:624.0px;width:41px;height:23px;border:1px solid #1e9fff;border-radius:12px;color:#1e9fff;font-size:12px;font-weight:bold;line-height:23px;text-align:center;">编辑</div><div style="position:absolute;left:1715px;top:624.0px;width:41px;height:23px;border:1px solid #f0b840;border-radius:12px;color:#e8aa2a;font-size:12px;font-weight:bold;line-height:23px;text-align:center;">禁用</div><div style="position:absolute;left:1760px;top:625.0px;width:40px;height:21px;background:#e9b63a;border-radius:11px;color:#fff;font-size:12px;font-weight:bold;line-height:22px;text-align:center;">财富</div><div style="position:absolute;left:1804px;top:625.0px;width:40px;height:21px;background:#e2685a;border-radius:11px;color:#fff;font-size:12px;font-weight:bold;line-height:22px;text-align:center;">登录</div><div style="position:absolute;left:249px;top:783.0px;width:18px;height:18px;border:1px solid #d2d2d2;border-radius:3px;background:#fff;"></div><div style="position:absolute;left:291px;top:782.0px;line-height:20px;font-size:14.5px;color:#333;font-weight:normal;white-space:nowrap;">5129</div><svg style="position:absolute;left:350px;top:772px" width="40" height="40" viewBox="0 0 40 40"><rect width="40" height="40" fill="#68a4ee"/><path d="M10.5 36.5 Q10 25.5 16.5 23.8 L23.5 23.8 Q30 25.5 29.8 36.5 Z" fill="#3d8cc2"/><path d="M16.8 23.8 L20 30 L23.2 23.8 Z" fill="#f2f6f8"/><path d="M19.3 25.2 L20.7 25.2 L21.1 31.5 L20 33 L18.9 31.5 Z" fill="#d9606a"/><rect x="18" y="20.5" width="4" height="3.5" fill="#f3d2bd"/><ellipse cx="12.9" cy="15.8" rx="1.2" ry="1.6" fill="#f3d2bd"/><ellipse cx="27.1" cy="15.8" rx="1.2" ry="1.6" fill="#f3d2bd"/><ellipse cx="20" cy="16" rx="6.4" ry="6.2" fill="#f8dcc8"/><g fill="#1d2230"><circle cx="16" cy="7.6" r="2.9"/><circle cx="19.6" cy="5.9" r="3"/><circle cx="23.2" cy="6.8" r="2.8"/><circle cx="25.6" cy="10.2" r="2.4"/><circle cx="14.2" cy="10.3" r="2"/><circle cx="12.9" cy="13" r="1.2"/><circle cx="26.9" cy="12.4" r="1.1"/><path d="M13.5 11.4 Q19 11.9 26.5 10.9 L26 8 L14 8 Z"/></g><ellipse cx="17" cy="15.6" rx="0.8" ry="1" fill="#8a8f98"/><ellipse cx="23" cy="15.6" rx="0.8" ry="1" fill="#8a8f98"/><path d="M17.9 19.1 Q20 21.6 22.1 19.1 Z" fill="#e4787a"/></svg><div style="position:absolute;left:418px;top:782.0px;line-height:20px;font-size:14px;color:#333;font-weight:normal;white-space:nowrap;letter-spacing:-0.36px">AB#TLFAPEBR2</div><div style="position:absolute;left:569px;top:782.0px;line-height:20px;font-size:14px;color:#333;font-weight:normal;white-space:nowrap;letter-spacing:0.06px">TWohcW4CYyJ7LYsHk6vBSxQJFBfb5ty8Nc</div><div style="position:absolute;left:969px;top:722.0px;line-height:20px;font-size:14px;color:#333;font-weight:normal;white-space:nowrap;">可用余额:0.00</div><div style="position:absolute;left:969px;top:742.0px;line-height:20px;font-size:14px;color:#333;font-weight:normal;white-space:nowrap;">累计充值:0.00</div><div style="position:absolute;left:969px;top:762.0px;line-height:20px;font-size:14px;color:#333;font-weight:normal;white-space:nowrap;">累计投入:0.00</div><div style="position:absolute;left:969px;top:782.0px;line-height:20px;font-size:14px;color:#333;font-weight:normal;white-space:nowrap;">累计静态:0.00</div><div style="position:absolute;left:969px;top:802.0px;line-height:20px;font-size:14px;color:#333;font-weight:normal;white-space:nowrap;">累计动态:0.00</div><div style="position:absolute;left:969px;top:822.0px;line-height:20px;font-size:14px;color:#333;font-weight:normal;white-space:nowrap;">团队充值:0</div><div style="position:absolute;left:969px;top:842.0px;line-height:20px;font-size:14px;color:#333;font-weight:normal;white-space:nowrap;">团队提现:0</div><div style="position:absolute;left:1131px;top:782.0px;line-height:20px;font-size:14px;color:#333;font-weight:normal;white-space:nowrap;">普通会员</div><div style="position:absolute;left:1217px;top:782.0px;line-height:20px;font-size:14.5px;color:#333;font-weight:normal;white-space:nowrap;">117.136.122.148</div><div style="position:absolute;left:1366px;top:782.0px;line-height:20px;font-size:14.5px;color:#333;font-weight:normal;white-space:nowrap;letter-spacing:0.12px">2022-03-27 23:02</div><div style="position:absolute;left:1526px;top:762.0px;line-height:20px;font-size:14px;color:#333;font-weight:normal;white-space:nowrap;">UID:无</div><div style="position:absolute;left:1526px;top:782.0px;line-height:20px;font-size:14px;color:#333;font-weight:normal;white-space:nowrap;">用户名:无</div><div style="position:absolute;left:1526px;top:802.0px;line-height:20px;font-size:14px;color:#333;font-weight:normal;white-space:nowrap;">账号:无</div><svg style="position:absolute;left:1615px;top:787.0px" width="15" height="11" viewBox="0 0 15 11" fill="none" stroke="#7896ab" stroke-width="1"><path d="M1 5l4.5 4.5L14 1"/></svg><div style="position:absolute;left:1669px;top:781.0px;width:41px;height:23px;border:1px solid #1e9fff;border-radius:12px;color:#1e9fff;font-size:12px;font-weight:bold;line-height:23px;text-align:center;">编辑</div><div style="position:absolute;left:1715px;top:781.0px;width:41px;height:23px;border:1px solid #f0b840;border-radius:12px;color:#e8aa2a;font-size:12px;font-weight:bold;line-height:23px;text-align:center;">禁用</div><div style="position:absolute;left:1760px;top:782.0px;width:40px;height:21px;background:#e9b63a;border-radius:11px;color:#fff;font-size:12px;font-weight:bold;line-height:22px;text-align:center;">财富</div><div style="position:absolute;left:1804px;top:782.0px;width:40px;height:21px;background:#e2685a;border-radius:11px;color:#fff;font-size:12px;font-weight:bold;line-height:22px;text-align:center;">登录</div><div style="position:absolute;left:969px;top:879.0px;line-height:20px;font-size:14px;color:#333;font-weight:normal;white-space:nowrap;">可用余额:0.00</div><div style="position:absolute;left:969px;top:899.0px;line-height:20px;font-size:14px;color:#333;font-weight:normal;white-space:nowrap;">累计充值:0.00</div><div style="position:absolute;left:969px;top:919.0px;line-height:20px;font-size:14px;color:#333;font-weight:normal;white-space:nowrap;">累计投入:0.00</div><div style="position:absolute;left:969px;top:939.0px;line-height:20px;font-size:14px;color:#333;font-weight:normal;white-space:nowrap;">累计静态:0.00</div><div style="position:absolute;left:969px;top:959.0px;line-height:20px;font-size:14px;color:#333;font-weight:normal;white-space:nowrap;">累计动态:0.00</div><div style="position:absolute;left:969px;top:979.0px;line-height:20px;font-size:14px;color:#333;font-weight:normal;white-space:nowrap;">团队充值:0</div><div style="position:absolute;left:969px;top:999.0px;line-height:20px;font-size:14px;color:#333;font-weight:normal;white-space:nowrap;">团队提现:0</div>
</div>
<div style="position:absolute;left:220px;top:914px;width:1683px;height:21px;background:#fafafa;"></div>
<div style="position:absolute;left:220px;top:914px;width:1691px;height:1px;background:#e6e6e6;"></div>
<div style="position:absolute;left:226px;top:916.7px;line-height:20px;font-size:12px;color:#999;font-weight:normal;white-space:nowrap;letter-spacing:0.3px">后台管理系统 版权所有 © 2018-2022</div>
<div style="position:absolute;left:1752px;top:916.7px;line-height:20px;font-size:12px;color:#999;font-weight:normal;white-space:nowrap;">Powered By 后台管理系统</div>
</body></html>
